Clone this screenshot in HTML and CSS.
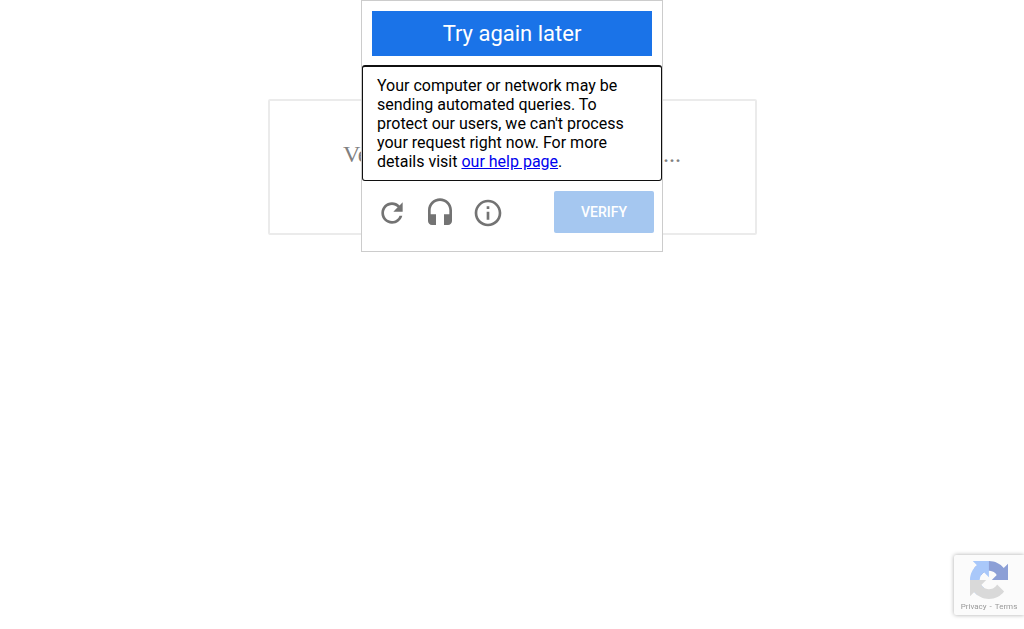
FILE: index.html
```html
<!DOCTYPE html>
<html lang="en">
<head>
<meta charset="utf-8">
<meta name="viewport" content="width=device-width, initial-scale=1">
<title>Verification</title>
<link rel="stylesheet" href="styles.css">
</head>
<body>
<main class="page">
  <section class="notice"><p class="notice-text">Verifying that you are not a robot...</p></section>
</main>

<div class="challenge" role="dialog" aria-labelledby="challenge-title">
  <h1 class="challenge-title" id="challenge-title">Try again later</h1>
  <p class="challenge-body">Your computer or network may be sending automated queries. To protect our users, we can't process your request right now. For more details visit <a href="#help">our help page</a>.</p>
  <div class="controls">
    <button class="icon-button" type="button" aria-label="Get a new challenge">
      <svg viewBox="0 0 24 24"><path d="M17.65 6.35C16.2 4.9 14.21 4 12 4c-4.42 0-7.99 3.58-7.99 8s3.57 8 7.99 8c3.73 0 6.84-2.55 7.73-6h-2.08c-.82 2.33-3.04 4-5.65 4-3.31 0-6-2.69-6-6s2.69-6 6-6c1.66 0 3.14.69 4.22 1.78L13 11h7V4l-2.35 2.35z"/></svg>
    </button>
    <button class="icon-button" type="button" aria-label="Get an audio challenge">
      <svg viewBox="0 0 24 24"><path d="M12 1c-4.97 0-9 4.03-9 9v8c0 1.66 1.34 3 3 3h3v-8H5v-3c0-3.87 3.13-7 7-7s7 3.13 7 7v3h-4v8h3c1.66 0 3-1.34 3-3v-8c0-4.97-4.03-9-9-9z"/></svg>
    </button>
    <button class="icon-button" type="button" aria-label="Help">
      <svg viewBox="0 0 24 24"><path d="M11 17h2v-6h-2v6zm1-15C6.48 2 2 6.48 2 12s4.48 10 10 10 10-4.48 10-10S17.52 2 12 2zm0 18c-4.41 0-8-3.59-8-8s3.59-8 8-8 8 3.59 8 8-3.59 8-8 8zM11 9h2V7h-2v2z"/></svg>
    </button>
    <button class="verify" type="button">Verify</button>
  </div>
</div>

<aside class="badge">
  <svg class="badge-logo" viewBox="0 0 64 64" aria-hidden="true">
    <path fill="#8c9fd6" d="M64 31.955l-.005-1.362V4.687l-7.162 7.162C50.97 4.674 42.055.093 32.07.093c-10.392 0-19.624 4.96-25.458 12.64l11.739 11.862a15.55 15.55 0 0 1 4.754-5.334c2.05-1.6 4.952-2.906 8.968-2.906.485 0 .86.057 1.135.163 4.976.393 9.288 3.14 11.828 7.124l-8.309 8.31L64 31.955"/>
    <path fill="#a9c8fa" d="M31.862.094H4.594l7.162 7.162C4.58 13.124 0 22.039 0 32.024c0 10.392 4.96 19.624 12.64 25.458l11.862-11.739a15.55 15.55 0 0 1-5.334-4.754c-1.6-2.05-2.906-4.952-2.906-8.968 0-.485.057-.86.163-1.135.393-4.976 3.14-9.288 7.124-11.828l8.31 8.309L31.862.094"/>
    <path fill="#d9d9d9" d="M0 32.045v27.268l7.168-7.162C13.031 59.326 21.946 63.907 31.93 63.907c10.392 0 19.624-4.96 25.458-12.64L45.65 39.405a15.55 15.55 0 0 1-4.754 5.334c-2.05 1.6-4.952 2.906-8.968 2.906-.485 0-.86-.057-1.135-.163-4.976-.393-9.288-3.14-11.828-7.124l8.309-8.31L0 32.045"/>
  </svg>
  <div class="badge-links"><a href="#privacy">Privacy</a><span>-</span><a href="#terms">Terms</a></div>
</aside>
</body>
</html>
```
FILE: styles.css
```css
* { box-sizing: border-box; }

body {
  margin: 0;
  background: #fff;
  font-family: Roboto, "Liberation Sans", sans-serif;
}

.page {
  display: flex;
  justify-content: center;
  padding-top: 99px;
}

.notice {
  width: 489px;
  max-width: 100%;
  padding: 39px 10px 65px;
  border: 2px solid #ebebeb;
  border-radius: 2px;
  text-align: center;
}

.notice-text {
  margin: 0;
  color: #808080;
  font-family: "Liberation Serif", serif;
  font-size: 24px;
  line-height: 28px;
}

.challenge {
  position: absolute;
  top: 0;
  left: 50%;
  width: 302px;
  transform: translateX(-50%);
  border: 1px solid #ccc;
  background: #fff;
}

.challenge-title {
  margin: 10px 10px 9px;
  background: #1a73e8;
  color: #fff;
  font-size: 22px;
  font-weight: 400;
  line-height: 45px;
  text-align: center;
}

.challenge-body {
  margin: 0;
  padding: 9px 14px;
  border: 1px solid #101010;
  border-top-width: 2px;
  border-radius: 3px;
  color: #000;
  font-size: 16px;
  line-height: 19px;
}

.challenge-body a { color: #0000ee; }

.controls {
  display: flex;
  align-items: flex-end;
  gap: 16px;
  padding: 10px 8px 18px 14px;
}

.icon-button {
  height: 38px;
  width: 32px;
  padding: 0 0 6px;
  border: 0;
  background: none;
  cursor: pointer;
}

.icon-button svg {
  display: block;
  width: 32px;
  height: 32px;
  fill: #737373;
}

.controls .icon-button { margin-bottom: -2px; }

.verify {
  width: 100px;
  height: 42px;
  margin-left: auto;
  border: 0;
  border-radius: 2px;
  background: #a5c7f0;
  color: #fff;
  font-family: inherit;
  font-size: 14px;
  font-weight: 500;
  text-transform: uppercase;
}

.badge {
  position: fixed;
  right: 0;
  bottom: 14px;
  display: flex;
  flex-direction: column;
  align-items: center;
  width: 70px;
  height: 60px;
  padding-top: 6px;
  border-radius: 2px 0 0 2px;
  background: #fbfbfb;
  box-shadow: 0 0 4px #aaa;
}

.badge-logo {
  width: 38px;
  height: 38px;
}

.badge-links {
  display: flex;
  gap: 3px;
  color: #999;
  font-size: 8px;
  line-height: 16px;
  white-space: nowrap;
}

.badge-links a {
  color: inherit;
  text-decoration: none;
}
```
